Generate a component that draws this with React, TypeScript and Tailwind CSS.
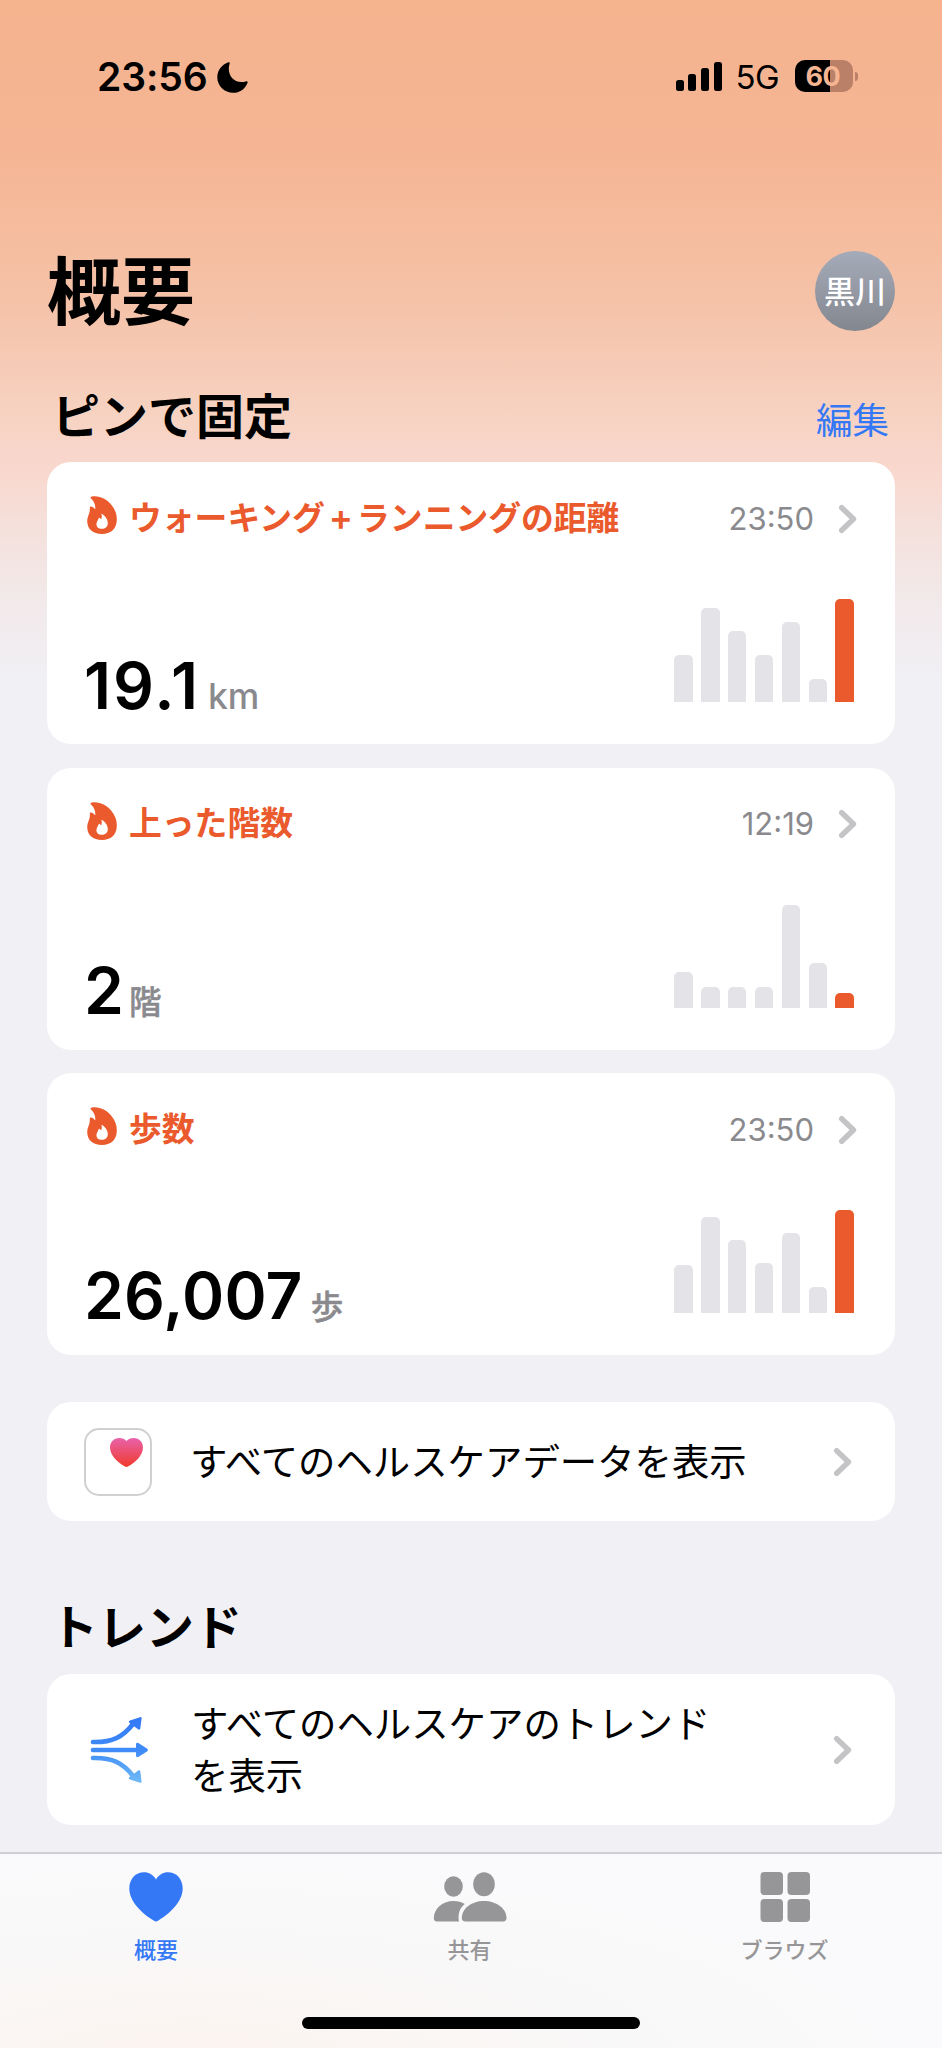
import type { ReactNode } from 'react';

function Chevron() {
  return (
    <svg className="h-[30px] w-[20px] shrink-0" viewBox="0 0 20 30" fill="none">
      <path d="M3.700 3.700 L15.500 15 L3.700 26.300" stroke="#c4c4c7" strokeWidth="5.400" strokeLinecap="round" strokeLinejoin="round" />
    </svg>
  );
}

function Flame() {
  return (
    <svg className="h-[38px] w-[30px] shrink-0" viewBox="0 0 30 38">
      <path
        fill="#ea5a2c"
        fillRule="evenodd"
        d="M4.2 .7 C12 -1 20 3.5 24.5 9 C28.5 14 30 19 29.8 24 C29.6 33 23.500 38 15 38 C6 38 .2 33 .2 25 C.2 20.500 2.500 18 2.800 14.500 C2.900 12.500 2.600 11 3.300 10.600 C4.600 10 6.500 11.500 8.300 13.300 C8.500 9 7.500 6 4 2.500 C3.300 1.700 3.400 .9 4.200 .7 Z M14.200 17.800 C15.200 19.500 14.800 21.500 14.200 23.300 C13.400 23 13.200 22.300 12.500 21.800 C11.500 21.500 11.600 23 10.800 24.200 C8.500 27.500 8.800 32.800 15 32.800 C21.500 32.800 22 26.500 19.200 22 C17.800 19.800 16 18.400 14.200 17.800 Z"
      />
    </svg>
  );
}

function StatusBar() {
  return (
    <div className="flex h-[154px] items-start justify-between pr-[84px] pl-[97px] pt-[57px]">
      <div className="flex h-[40px] items-center gap-[9px]">
        <span className="text-[39px] leading-[40px] font-semibold tracking-[-0.100px]">23:56</span>
        <svg className="h-[31px] w-[31px]" viewBox="0 0 31 31">
          <path d="M11.500 .3 C12.600 -.1 13 .6 12.600 1.700 C9.500 11 15.500 22.500 28.800 19.400 C30.300 19 31 19.700 30.500 20.900 C28.200 26.800 22.600 30.800 16.200 30.800 C7.400 30.800 .3 24 .3 15.300 C.3 8.500 4.800 2.500 11.500 .3 Z" />
        </svg>
      </div>
      <div className="-mt-px flex h-[40px] items-center">
        <div className="flex items-end gap-[4.600px]">
          <span className="h-[11px] w-[8px] rounded-[2.500px] bg-black" />
          <span className="h-[17px] w-[8px] rounded-[2.500px] bg-black" />
          <span className="h-[23px] w-[8px] rounded-[2.500px] bg-black" />
          <span className="h-[29px] w-[8px] rounded-[2.500px] bg-black" />
        </div>
        <span className="ml-[14px] w-[44px] pt-[2px] text-[33px] leading-[40px] tracking-[-0.500px]">5G</span>
        <div className="ml-[15px] flex h-[32px] w-[58.500px] items-center justify-center rounded-[10px] bg-[linear-gradient(90deg,#000_60%,#ba8068_60%)] pr-[2px] text-[27px] leading-none font-bold tracking-[-0.500px] text-[#f5b592]">
          60
        </div>
        <span className="ml-[2px] h-[9px] w-[3px] rounded-r-full bg-[#ba8068]" />
      </div>
    </div>
  );
}

type Metric = { title: ReactNode; time: string; value: string; valueClass: string; unit: string; bars: number[] };

const metrics: Metric[] = [
  {
    title: (
      <>
        ウォーキング<span className="mx-[4px] text-[36px] leading-none font-semibold">+</span>ランニングの距離
      </>
    ),
    time: '23:50',
    value: '19.1',
    valueClass: 'mr-[8px] tracking-[2px]',
    unit: 'km',
    bars: [47, 94, 71, 47, 80, 23, 103],
  },
  { title: '上った階数', time: '12:19', value: '2', valueClass: 'mr-[5px]', unit: '階', bars: [36, 21, 21, 21, 103, 45, 15] },
  { title: '歩数', time: '23:50', value: '26,007', valueClass: 'mr-[8px] tracking-[0.200px]', unit: '歩', bars: [48, 96, 73, 50, 80, 26, 103] },
];

function MetricCard({ title, time, value, valueClass, unit, bars }: Metric) {
  return (
    <section className="flex h-[282px] flex-col justify-between rounded-[24px] bg-white pt-[33px] pr-[37px] pb-[28px] pl-[38px]">
      <div className="flex h-[40px] items-center pl-[2px]">
        <Flame />
        <h3 className="ml-[12px] grow pt-[5px] text-[32.800px] leading-[40px] font-bold text-[#ea5a2c]">{title}</h3>
        <span className="mr-[24px] pt-[7px] text-[31px] leading-[40px] text-[#8a8a8e]">{time}</span>
        <div className="pt-[7px]">
          <Chevron />
        </div>
      </div>
      <div className="flex items-end justify-between pr-[4px]">
        <div className="-mb-[13px] flex items-baseline leading-[64px]">
          <span className={`-ml-px text-[64px] font-semibold ${valueClass}`}>{value}</span>
          <span className={unit === 'km' ? 'text-[35.500px] font-medium text-[#8a8a8e]' : 'text-[32.500px] font-medium text-[#8a8a8e] [-webkit-text-stroke:0.500px_#8a8a8e]'}>{unit}</span>
        </div>
        <div className="mb-[14px] flex h-[104px] items-end gap-[8.300px]">
          {bars.map((height, i) => (
            <span
              key={i}
              className={i === bars.length - 1 ? 'w-[18.600px] rounded-t-[5px] bg-[#ea5a2c]' : 'w-[18.600px] rounded-t-[5px] bg-[#e4e3e8]'}
              style={{ height }}
            />
          ))}
        </div>
      </div>
    </section>
  );
}

function TabItem({ label, active, children }: { label: string; active?: boolean; children: ReactNode }) {
  return (
    <div className={active ? 'flex w-[312px] flex-col items-center text-[#3478f6]' : 'flex w-[315px] flex-col items-center text-[#969698]'}>
      {children}
      <span className="mt-[13px] text-[22px] leading-[30px] font-medium">{label}</span>
    </div>
  );
}

export default function App() {
  return (
    <div className="flex h-[2048px] w-[942px] flex-col overflow-hidden bg-[#f1f0f5] bg-[linear-gradient(180deg,#f5b38e_0px,#f5b594_150px,#f5bc9d_230px,#f5c3aa_310px,#f6cbb6_365px,#f7d3c3_420px,#f9d7cd_465px,#f4e2de_540px,#f2e9ea_600px,#f1f0f5_680px)] font-['Inter','Noto_Sans_CJK_JP',sans-serif] text-black">
      <StatusBar />
      <header className="mt-[97px] flex h-[80px] items-center justify-between pr-[47px] pl-[47px]">
        <h1 className="pt-[2px] text-[74px] leading-[80px] font-bold">概要</h1>
        <div className="flex h-[80px] w-[80px] items-center justify-center rounded-full bg-linear-to-b from-[#a5abb9] to-[#83878f] pt-px text-[31px] leading-[40px] font-medium text-white">
          黒川
        </div>
      </header>
      <div className="mt-[55px] flex h-[60px] items-center justify-between pr-[53px] pl-[52px]">
        <h2 className="pt-px text-[48px] leading-[60px] font-bold">ピンで固定</h2>
        <span className="pt-[9px] text-[36.500px] leading-[54px] text-[#3478f6]">編集</span>
      </div>
      <main className="mt-[16px] flex flex-col gap-[23.500px] px-[47px]">
        {metrics.map((m) => (
          <MetricCard key={m.value} {...m} />
        ))}
      </main>
      <div className="mx-[47px] mt-[47px] flex h-[119px] shrink-0 items-center rounded-[24px] bg-white pr-[42px] pl-[37px]">
        <div className="flex h-[68px] w-[68px] justify-end rounded-[15px] border-2 border-[#d0d0d2] pt-[8px] pr-[7px]">
          <svg className="h-[29px] w-[33px]" viewBox="0 0 33 29">
            <defs>
              <linearGradient id="health" x1="0" y1="0" x2="0" y2="1">
                <stop offset="0" stopColor="#e962ab" />
                <stop offset="1" stopColor="#f03a2b" />
              </linearGradient>
            </defs>
            <path fill="url(#health)" d="M16.500 3 C18.200 1 20.800 0 23.700 0 C29 0 33 4 33 9.500 C33 17 26 24 18 28.500 C17 29.100 16 29.100 15 28.500 C7 24 0 17 0 9.500 C0 4 4 0 9.300 0 C12.200 0 14.800 1 16.500 3 Z" />
          </svg>
        </div>
        <span className="ml-[38px] grow pt-[2px] text-[37.400px] leading-[52px]">すべてのヘルスケアデータを表示</span>
        <Chevron />
      </div>
      <h2 className="mt-[77px] pl-[50px] text-[48px] leading-[60px] font-bold">トレンド</h2>
      <div className="mx-[47px] mt-[16px] flex h-[151px] shrink-0 items-center rounded-[24px] bg-white pr-[42px] pl-[43px]">
        <svg className="h-[68px] w-[58px] shrink-0" viewBox="0 0 58 68" fill="none" strokeWidth="4.600" strokeLinecap="round">
          <defs>
            <linearGradient id="trend" gradientUnits="userSpaceOnUse" x1="0" y1="0" x2="0" y2="68">
              <stop offset="0" stopColor="#3478f6" />
              <stop offset=".5" stopColor="#3f8bf7" />
              <stop offset="1" stopColor="#72bcf6" />
            </linearGradient>
          </defs>
          <path stroke="url(#trend)" d="M3 26 C22 26.500 33 21 43 8" />
          <path stroke="url(#trend)" d="M3 33.990 L47 34" />
          <path stroke="url(#trend)" d="M3 42 C22 41.500 33 47 43 60" />
          <path fill="url(#trend)" d="M50 1.200 C51 .8 51.700 1.300 51.600 2.400 L50.300 12.500 C50.100 13.800 49 14 48 13.200 L39.500 7 C38.500 6.200 38.600 5 39.900 4.600 Z" />
          <path fill="url(#trend)" d="M46 28.500 C46 27 47.100 26.400 48.300 27.100 L57 32.600 C58.200 33.400 58.200 34.600 57 35.400 L48.300 40.900 C47.100 41.600 46 41 46 39.500 Z" />
          <path fill="url(#trend)" d="M50 66.800 C51 67.200 51.700 66.700 51.600 65.600 L50.300 55.500 C50.100 54.200 49 54 48 54.800 L39.500 61 C38.500 61.800 38.600 63 39.900 63.400 Z" />
        </svg>
        <span className="ml-[43px] grow pt-[2px] text-[37.400px] leading-[52px]">
          すべてのヘルスケアのトレンド
          <br />
          を表示
        </span>
        <Chevron />
      </div>
      <nav className="mt-auto flex h-[196px] shrink-0 flex-col items-center border-t-2 border-[#cfced3] bg-[#fafafb] bg-[radial-gradient(ellipse_at_20%_110%,#fcf4ef_0%,#f9f8f8_40%,#fafafc_75%)]">
        <div className="flex w-full grow pt-[18px]">
          <TabItem label="概要" active>
            <svg className="h-[50px] w-[54px]" viewBox="0 0 54 50" fill="currentColor">
              <path d="M27 7.500 C29.500 3 34 .3 39 .3 C47.500 .3 53.700 7 53.700 16.500 C53.700 29.500 41 41.500 29 48.700 C27.500 49.600 26.500 49.600 25 48.700 C13 41.500 .3 29.500 .3 16.500 C.3 7 6.500 .3 15 .3 C20 .3 24.500 3 27 7.500 Z" />
            </svg>
          </TabItem>
          <TabItem label="共有">
            <svg className="h-[50px] w-[74px]" viewBox="0 0 74 50" fill="currentColor">
              <ellipse cx="20.500" cy="14.500" rx="9.300" ry="10.300" />
              <ellipse cx="51" cy="12.300" rx="10.800" ry="12" />
              <path d="M31.800 32 C27 35.500 24.500 42 26 49.500 L4 49.500 C2 49.500 .8 48.400 .8 46.500 C.8 37 9 29 20.500 29 C25 29 28.700 30 31.800 32 Z" />
              <path d="M51 29 C64 29 73.500 37 73.500 46 C73.500 48.300 72.300 49.500 70 49.500 L32.500 49.500 C30 49.500 28.800 48.300 28.800 46 C28.800 37 38 29 51 29 Z" />
            </svg>
          </TabItem>
          <TabItem label="ブラウズ">
            <svg className="h-[50px] w-[50px]" viewBox="0 0 50 50" fill="currentColor">
              <rect x=".5" y="0" width="22.500" height="23" rx="4" />
              <rect x="27.500" y="0" width="22.500" height="23" rx="4" />
              <rect x=".5" y="27" width="22.500" height="23" rx="4" />
              <rect x="27.500" y="27" width="22.500" height="23" rx="4" />
            </svg>
          </TabItem>
        </div>
        <div className="mb-[19px] h-[12px] w-[338px] rounded-full bg-black" />
      </nav>
    </div>
  );
}
